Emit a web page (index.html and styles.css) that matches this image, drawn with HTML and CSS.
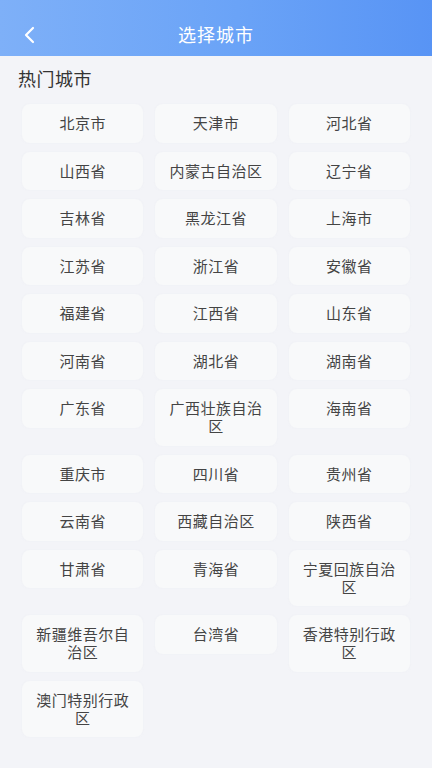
FILE: index.html
```html
<!DOCTYPE html>
<html lang="zh-CN">
<head>
  <meta charset="UTF-8">
  <meta name="viewport" content="width=device-width, initial-scale=1.0">
  <title>选择城市</title>
  <link rel="stylesheet" href="styles.css">
</head>
<body>
  <header class="topbar">
    <button class="back" aria-label="返回">
      <svg width="14" height="18" viewBox="0 0 14 18"><path d="M10 2 L3 9 L10 16" fill="none" stroke="#fff" stroke-width="2.2" stroke-linecap="round" stroke-linejoin="round"/></svg>
    </button>
    <h1 class="title">选择城市</h1>
  </header>

  <main class="content">
    <h2 class="section-title">热门城市</h2>
    <div class="city-grid">
      <div class="city">北京市</div>
      <div class="city">天津市</div>
      <div class="city">河北省</div>
      <div class="city">山西省</div>
      <div class="city">内蒙古自治区</div>
      <div class="city">辽宁省</div>
      <div class="city">吉林省</div>
      <div class="city">黑龙江省</div>
      <div class="city">上海市</div>
      <div class="city">江苏省</div>
      <div class="city">浙江省</div>
      <div class="city">安徽省</div>
      <div class="city">福建省</div>
      <div class="city">江西省</div>
      <div class="city">山东省</div>
      <div class="city">河南省</div>
      <div class="city">湖北省</div>
      <div class="city">湖南省</div>
      <div class="city">广东省</div>
      <div class="city">广西壮族自治区</div>
      <div class="city">海南省</div>
      <div class="city">重庆市</div>
      <div class="city">四川省</div>
      <div class="city">贵州省</div>
      <div class="city">云南省</div>
      <div class="city">西藏自治区</div>
      <div class="city">陕西省</div>
      <div class="city">甘肃省</div>
      <div class="city">青海省</div>
      <div class="city">宁夏回族自治区</div>
      <div class="city">新疆维吾尔自治区</div>
      <div class="city">台湾省</div>
      <div class="city">香港特别行政区</div>
      <div class="city">澳门特别行政区</div>
    </div>
  </main>
</body>
</html>
```

FILE: styles.css
```css
body {
  margin: 0;
  min-height: 768px;
  background-color: #f3f4f8;
  font-family: "Noto Sans CJK SC", "Noto Sans", sans-serif;
  color: #333;
}
.topbar {
  height: 56px;
  display: flex;
  align-items: center;
  justify-content: center;
  position: relative;
  background: linear-gradient(90deg, #7eb0f8 0%, #6aa3f7 55%, #5894f5 100%);
}
.back {
  position: absolute;
  left: 16px;
  top: 21px;
  width: 28px;
  height: 28px;
  border: none;
  background: none;
  padding: 0;
  display: flex;
  align-items: center;
  justify-content: center;
}
.title {
  margin: 0;
  padding-top: 12px;
  font-size: 18px;
  font-weight: 400;
  color: #fff;
  letter-spacing: 1px;
}
.content {
  padding: 0 22px;
}
.section-title {
  margin: 0 0 0 -4px;
  padding-top: 10px;
  height: 38px;
  line-height: 24px;
  font-size: 18px;
  font-weight: 400;
  color: #333;
  letter-spacing: 0.5px;
}
.city-grid {
  display: grid;
  grid-template-columns: repeat(3, 1fr);
  column-gap: 12px;
  row-gap: 9px;
  align-items: start;
}
.city {
  background-color: #f8f9fa;
  border-radius: 8px;
  padding: 10.25px 10px;
  text-align: center;
  font-size: 15px;
  line-height: 18px;
  color: #444;
  box-shadow: 0 0 2px rgba(225, 228, 238, 0.35);
  letter-spacing: 0.5px;
}
```
